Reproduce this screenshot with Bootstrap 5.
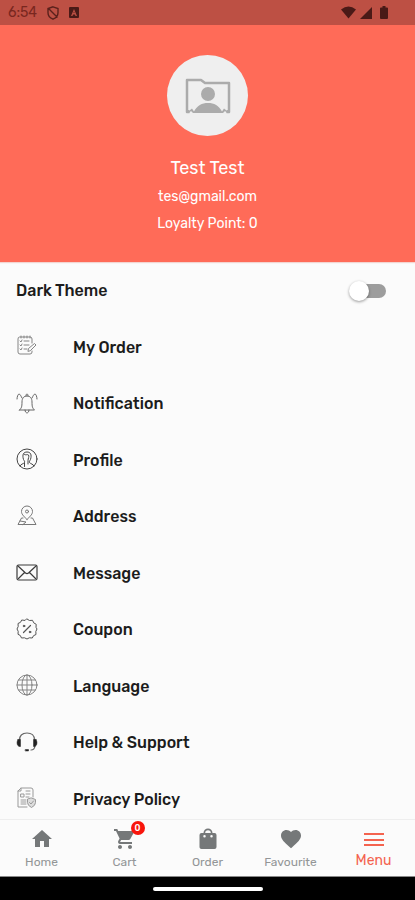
<!DOCTYPE html>
<html lang="en">
<head>
<meta charset="utf-8">
<meta name="viewport" content="width=device-width, initial-scale=1">
<title>Menu</title>
<link href="https://cdn.jsdelivr.net/npm/bootstrap@5.3.0/dist/css/bootstrap.min.css" rel="stylesheet">
<style>
  body { font-family: Rubik, Roboto, "Liberation Sans", sans-serif; background: #fbfbfb; color: #1c1c1c; }
  .statusbar { height: 25px; background: #bd5044; color: #79271f; font-size: 14px; line-height: 24px; padding: 0 27px 0 8px; }
  .statusbar svg { fill: #4a1a17; }
  .hero { background: #ff6b58; padding: 30px 0 28px; box-shadow: 0 1px 1px #f3d5d1; }
  .avatar { width: 81px; height: 81px; background: #efefef; }
  .hero h1 { font-size: 18px; line-height: 24px; margin: 20px 0 0; font-weight: 400; }
  .hero p { font-size: 14px; line-height: 20px; margin: 7px 0 0; }
  .menu-list { display: grid; grid-auto-rows: minmax(56px, 1fr); margin-bottom: -8px; font-size: 16px; font-weight: 500; }
  .menu-row { padding: 2px 16px 0; color: #1c1c1c; text-decoration: none; }
  .menu-row svg { width: 22px; height: 22px; margin-bottom: 3px; fill: none; stroke: #555; stroke-width: 1; stroke-linecap: round; stroke-linejoin: round; flex: none; }
  .menu-row span { margin-left: 35px; }
  .theme-switch { appearance: none; width: 32px; height: 14px; margin: 0 13px 0 0; border-radius: 7px; background: #9d9d9d; display: flex; align-items: center; cursor: pointer; }
  .theme-switch::before { content: ""; width: 20px; height: 20px; margin-left: -5px; flex: none; border-radius: 50%; background: #fff; box-shadow: 0 1px 3px #0006; }
  .theme-switch:checked::before { margin-left: 17px; }
  .tabs { z-index: 2; background: #fbfbfb; height: 58px; border-top: 1px solid #eee; border-bottom: 1px solid #888; }
  .tab { color: #939697; font-size: 12px; line-height: 16px; padding-top: 7px; text-decoration: none; }
  .tab svg { width: 24px; height: 24px; fill: #757879; display: block; margin-bottom: 3px; }
  .tab.active { color: #f4634f; font-size: 14px; }
  .tab.active svg { fill: #f4634f; margin-bottom: 2px; }
  .count { left: 18px; top: -6px; width: 14px; height: 14px; background: #f8150c; color: #fff; font-size: 9px; line-height: 14px; font-weight: 500; }
  .gesture { height: 23px; background: #000; }
  .gesture div { width: 110px; height: 4px; border-radius: 2px; background: #fff; }
</style>
<script src="https://cdn.jsdelivr.net/npm/bootstrap@5.3.0/dist/js/bootstrap.bundle.min.js"></script>
</head>
<body>
<div class="d-flex flex-column min-vh-100">
  <div class="statusbar d-flex align-items-center">
    <span>6:54</span>
    <svg class="ms-2" width="16" height="16" viewBox="0 0 16 16"><path d="M8 1.8 13 3.5v4.2c0 3-2 5.2-5 6.5-3-1.300-5-3.500-5-6.500V3.500z M3.500 3.500l9 9" style="fill:none;stroke:#5b211c;stroke-width:1.400"/></svg>
    <svg class="ms-2" width="10" height="11" viewBox="0 0 10 11"><path fill-rule="evenodd" d="M1 0h8a1 1 0 0 1 1 1v9a1 1 0 0 1-1 1H1a1 1 0 0 1-1-1V1a1 1 0 0 1 1-1zM5 2 2 9h1.500l.5-1.500h2L6.500 9H8zM4.500 6 5 4.500 5.500 6z"/></svg>
    <svg class="ms-auto" width="15" height="13" viewBox="0 0 15 13"><path d="M0 3.500Q7.500-2.500 15 3.500L7.500 12.500z"/></svg>
    <svg class="ms-1" width="12" height="12" viewBox="0 0 12 12"><path d="M12 0v12H0z"/></svg>
    <svg class="ms-2" width="8" height="13" viewBox="0 0 8 13"><path d="M2.500 0h3v1.500H7a1 1 0 0 1 1 1V12a1 1 0 0 1-1 1H1a1 1 0 0 1-1-1V2.500a1 1 0 0 1 1-1h1.500z"/></svg>
  </div>

  <header class="hero text-white d-flex flex-column align-items-center position-relative">
    <div class="avatar rounded-circle d-flex align-items-center justify-content-center">
      <svg width="46" height="36" viewBox="0 0 46 36">
        <path d="M4.500 34H2V2h14l4 3h24v29h-2.500" fill="none" stroke="#ababab" stroke-width="2.500" stroke-linejoin="round"/>
        <circle cx="23" cy="16" r="7" fill="#ababab"/>
        <path d="M1 35v-4l3.500 1.500L7 30.500l2 3C12 27.500 17 25 23 25s11 2.500 14 8.500l2-3 2.500 2L45 31v4h-3l-2-2-2 2H8l-2-2-2 2z" fill="#ababab"/>
      </svg>
    </div>
    <h1>Test Test</h1>
    <p>tes@gmail.com</p>
    <p>Loyalty Point: 0</p>
  </header>

  <main class="menu-list flex-grow-1">
    <div class="menu-row d-flex align-items-center justify-content-between">
      <label for="darkTheme">Dark Theme</label>
      <input class="theme-switch" type="checkbox" role="switch" id="darkTheme">
    </div>
    <a class="menu-row d-flex align-items-center" href="#order">
      <svg viewBox="0 0 22 22"><g stroke="#858585"><path d="M16 8V4q0-2-2-2H3.500Q2 2 2 4v13q0 2 2 2h10q2 0 2-2v-1M5 1v2M8 1v2M11 1v2M14 1v2"/><path d="m4 6 1 1 1-2M8 6h5M4 10l1 1 1-2M8 10h5M4 14l1 1 1-2M8 14h3M12 16l.5-2.500 6-5 1.500 1.500-5.500 5.500z"/></g></svg>
      <span>My Order</span>
    </a>
    <a class="menu-row d-flex align-items-center" href="#notification">
      <svg viewBox="0 0 22 22"><path d="M3.500 18h15c-2-2-2.500-3-2.500-8 0-4-2-6-5-6s-5 2-5 6c0 5-.5 6-2.500 8zM9 18c0 4 4 4 4 0M10 4c0-3 2-3 2 0M1 7c0-2 1-5 2-5s2 2 3 4M21 7c0-2-1-5-2-5s-2 2-3 4" stroke="#666"/></svg>
      <span>Notification</span>
    </a>
    <a class="menu-row d-flex align-items-center" href="#profile">
      <svg viewBox="0 0 22 22"><g stroke="#444"><circle cx="11" cy="11" r="10"/><path d="M4 18c.5-2 3.500-2 4.500-3.500.5-1-.5-2-1-3C6 6.500 7.500 4 11 4s5 2.500 3.500 7.500c-.5 1-1.500 2-1 3C14.500 16 17.500 16 18 18M8.500 6.500c1.500 1 3-.5 4 .5 1 1.500-.5 3.500-.5 5.500v3.500M8.500 15v3.500"/></g></svg>
      <span>Profile</span>
    </a>
    <a class="menu-row d-flex align-items-center" href="#address">
      <svg viewBox="0 0 22 22"><g stroke="#777"><path d="M11 14.500C7 10.500 5.500 9 5.500 6.500a5.500 5.500 0 0 1 11 0C16.500 9 15 10.500 11 14.500zM7 13H5.500L2 19.500h18L16.500 13H15M4 16l6 1-3 2.500"/><circle cx="11" cy="6.500" r="1.500"/></g></svg>
      <span>Address</span>
    </a>
    <a class="menu-row d-flex align-items-center" href="#message">
      <svg viewBox="0 0 22 22"><g stroke="#3b3b3b" stroke-width="1.200"><rect x="1" y="4" width="20" height="15" rx="1.500"/><path d="m2 5 7.500 7q1.500 1.300 3 0L20 5M2.500 17.500 8 12M19.500 17.500 14 12"/></g></svg>
      <span>Message</span>
    </a>
    <a class="menu-row d-flex align-items-center" href="#coupon">
      <svg viewBox="0 0 22 22"><g stroke="#555"><path d="M11 1l2.500 1.500 3-.2 1.200 2.500 2.500 1.500-.2 3L21 11l-1.200 2.500.2 3-2.500 1.200-1.200 2.300-3-.2L11 21l-2.500-1.200-3 .2-1.200-2.500-2.300-1.200.2-3L1 11l1.200-2.500-.2-3 2.500-1.200L5.700 2l3 .4z"/><path d="m14.500 7.500-7 7" stroke-width="1.200"/><circle cx="8" cy="8" r=".8" fill="#444"/><circle cx="14" cy="14" r=".8" fill="#444"/></g></svg>
      <span>Coupon</span>
    </a>
    <a class="menu-row d-flex align-items-center" href="#language">
      <svg viewBox="0 0 22 22"><g stroke="#858585"><circle cx="11" cy="11" r="10"/><ellipse cx="11" cy="11" rx="5" ry="10"/><path d="M11 1v20M1 11h20M2.500 6h17M2.500 16h17"/></g></svg>
      <span>Language</span>
    </a>
    <a class="menu-row d-flex align-items-center" href="#support">
      <svg viewBox="0 0 22 22"><path d="M3.500 9C3.500 4.500 6.500 2 11 2s7.500 2.500 7.500 7M19 15c-.5 3-2 4-4 4" stroke="#666" stroke-width="1.200"/><path d="M2 8.500h2.500v7H3q-2-1-2-3.500t1-3.500zM20 8.500h-2.500v7H19q2-1 2-3.500t-1-3.500zM9.500 18.500h3v1.500h-3z" fill="#222" stroke="#222" stroke-width=".5"/></svg>
      <span>Help &amp; Support</span>
    </a>
    <a class="menu-row d-flex align-items-center" href="#privacy">
      <svg viewBox="0 0 22 22"><g stroke="#999"><path d="M5 1h10q2 0 2 2v7M11 20H2V4l3-3v3H2M5 7h3v3H5zM10 4h4M10 7h4M10 10h3M5 13h5M5 15h5M5 17h5"/><path d="m15.500 11 4 1.500v3q0 3-4 5-4-2-4-5v-3z" fill="#ddd"/><path d="m13.500 15.500 1.500 1.500 2.500-3"/></g></svg>
      <span>Privacy Policy</span>
    </a>
  </main>

  <nav class="tabs d-flex position-relative" aria-label="Main">
    <a class="tab col d-flex flex-column align-items-center" href="#home">
      <svg viewBox="0 0 24 24"><path d="M10 20v-6h4v6h5v-8h3L12 3 2 12h3v8z"/></svg>Home
    </a>
    <a class="tab col d-flex flex-column align-items-center" href="#cart">
      <div class="position-relative">
        <svg viewBox="0 0 24 24"><path d="M7 18c-1.100 0-1.990.9-1.990 2S5.900 22 7 22s2-.9 2-2-.9-2-2-2zM1 2v2h2l3.600 7.590-1.350 2.450C4.520 15.370 5.480 17 7 17h12v-2H7.420c-.14 0-.25-.11-.25-.25l.93-1.750h7.450c.75 0 1.410-.41 1.750-1.030l3.580-6.490A1 1 0 0 0 20 4H5.210l-.94-2zm16 16c-1.100 0-1.990.9-1.990 2s.89 2 1.990 2 2-.9 2-2-.9-2-2-2z"/></svg>
        <span class="count position-absolute rounded-circle text-center">0</span>
      </div>Cart
    </a>
    <a class="tab col d-flex flex-column align-items-center" href="#orders">
      <svg viewBox="0 0 24 24"><path fill-rule="evenodd" d="M18.500 6H16.500a4.500 4.500 0 0 0-9 0H5.500a2 2 0 0 0-2 2v12c0 1.100.9 2 2 2h13a2 2 0 0 0 2-2V8a2 2 0 0 0-2-2zM12 3.200A2.800 2.800 0 0 1 14.800 6H9.200A2.800 2.800 0 0 1 12 3.200zM8.500 8a1 1 0 0 1 0 2.500 1 1 0 0 1 0-2.500zM15.500 8a1 1 0 0 1 0 2.500 1 1 0 0 1 0-2.500z"/></svg>Order
    </a>
    <a class="tab col d-flex flex-column align-items-center" href="#favourite">
      <svg viewBox="0 0 24 24"><path d="m12 21.350-1.450-1.320C5.400 15.360 2 12.280 2 8.500 2 5.420 4.420 3 7.500 3c1.740 0 3.410.81 4.500 2.090C13.090 3.810 14.760 3 16.500 3 19.580 3 22 5.420 22 8.500c0 3.780-3.400 6.860-8.550 11.540z"/></svg>Favourite
    </a>
    <a class="tab active col d-flex flex-column align-items-center" href="#menu" aria-current="page">
      <svg viewBox="0 0 24 24"><path d="M2 6h20v2H2zM2 12h20v2H2zM2 17h20v2H2z"/></svg>Menu
    </a>
  </nav>
  <div class="gesture d-flex align-items-center justify-content-center"><div></div></div>
</div>
</body>
</html>
